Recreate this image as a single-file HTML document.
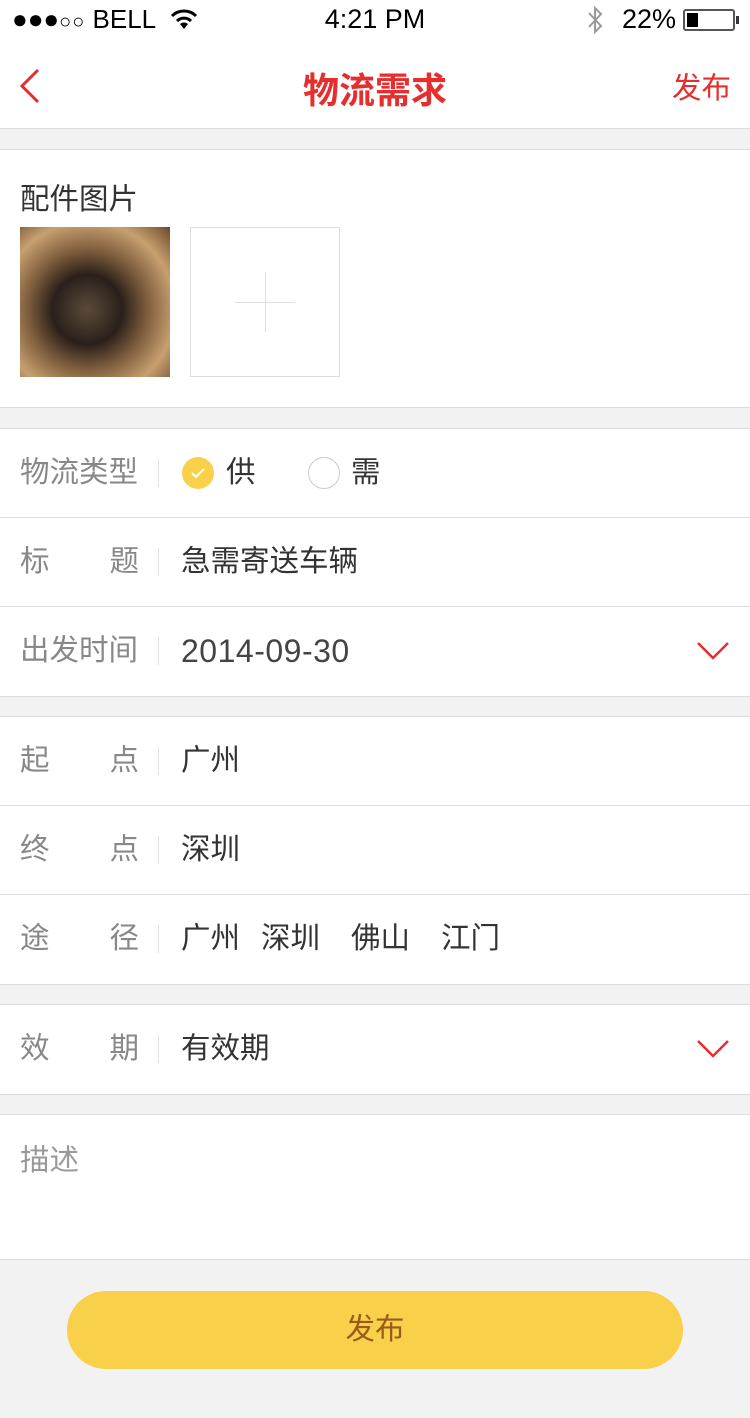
<!DOCTYPE html>
<html><head><meta charset="utf-8"><style>
*{margin:0;padding:0;box-sizing:border-box}
body{width:750px;height:1418px;background:#f2f2f2;font-family:"Liberation Sans","Noto Sans CJK SC",sans-serif;position:relative;overflow:hidden}
.abs{position:absolute}
.sec{position:absolute;left:0;width:750px;background:#fff;border-top:1px solid #ddd;border-bottom:1px solid #ddd}
.row{position:relative;height:89px;border-bottom:1px solid #ddd}
.row:last-child{border-bottom:none}
.lab{position:absolute;left:20px;top:0;width:119px;line-height:88px;font-size:29.5px;color:#888;display:flex;justify-content:space-between}
.div{position:absolute;left:158px;top:30px;width:1px;height:28px;background:#e2e2e2}
.val{position:absolute;left:181px;top:0;line-height:88px;font-size:29.5px;color:#333}
.chev{position:absolute;right:20px;top:34px}
</style></head><body>
<div class="abs" style="top:0;left:0;width:750px;height:129px;background:#fff;border-bottom:1px solid #ddd"></div>
<div class="abs" style="top:4px;left:12px;font-size:26px;color:#000">●●●<span style="font-size:20px;letter-spacing:1px">○○</span> BELL</div>
<svg class="abs" style="left:170px;top:8px" width="28" height="22" viewBox="0 0 28 22"><path d="M2 8 A17 17 0 0 1 26 8" stroke="#000" stroke-width="3" fill="none"/><path d="M7 13 A10 10 0 0 1 21 13" stroke="#000" stroke-width="3" fill="none"/><path d="M14 21 L10 16 A6 6 0 0 1 18 16Z" fill="#000"/></svg>
<div class="abs" style="top:4px;left:0;width:750px;text-align:center;font-size:27px;color:#000">4:21 PM</div>
<svg class="abs" style="left:584px;top:4px" width="22" height="32" viewBox="0 0 22 32"><path d="M5 9 L17 22 L11 28 L11 4 L17 10 L5 23" stroke="#999" stroke-width="2" fill="none"/></svg>
<div class="abs" style="top:4px;left:622px;font-size:27px;color:#000">22%</div>
<div class="abs" style="left:683px;top:9px;width:52px;height:22px;border:2px solid #555;border-radius:3px"><div style="width:11px;height:14px;margin:2px;background:#000"></div></div>
<div class="abs" style="left:736px;top:16px;width:3px;height:8px;background:#333"></div>
<svg class="abs" style="left:18px;top:68px" width="24" height="36" viewBox="0 0 24 36"><path d="M20 2 L4 18 L20 34" stroke="#e62e2e" stroke-width="3" fill="none"/></svg>
<div class="abs" style="top:62px;left:0;width:750px;text-align:center;font-size:36px;font-weight:bold;color:#e62e2e">物流需求</div>
<div class="abs" style="top:65px;left:672px;font-size:29.5px;color:#e62e2e">发布</div>

<div class="sec" style="top:149px;height:259px">
<div class="abs" style="left:20px;top:26px;font-size:29.5px;color:#333">配件图片</div>
<div class="abs" style="left:20px;top:77px;width:150px;height:150px;background:radial-gradient(circle at 45% 55%,#5a4a3a 0,#2a201a 30%,#7a5a3a 50%,#c8a070 75%,#6a4a2a 100%)"></div>
<div class="abs" style="left:190px;top:77px;width:150px;height:150px;border:1px solid #ddd"><div class="abs" style="left:44px;top:74px;width:60px;height:1px;background:#ddd"></div><div class="abs" style="left:74px;top:44px;width:1px;height:60px;background:#ddd"></div></div>
</div>

<div class="sec" style="top:428px">
<div class="row"><div class="lab"><span>物流类型</span></div><div class="div"></div>
<svg class="abs" style="left:182px;top:28px" width="32" height="32"><circle cx="16" cy="16" r="16" fill="#f8d04a"/><path d="M10 16 L14 20 L22 12" stroke="#fff" stroke-width="2" fill="none"/></svg>
<div class="val" style="left:226px">供</div>
<svg class="abs" style="left:308px;top:28px" width="32" height="32"><circle cx="16" cy="16" r="15.5" fill="none" stroke="#ccc"/></svg>
<div class="val" style="left:351px">需</div></div>
<div class="row"><div class="lab"><span>标</span><span>题</span></div><div class="div"></div><div class="val">急需寄送车辆</div></div>
<div class="row"><div class="lab"><span>出发时间</span></div><div class="div"></div><div class="val" style="font-size:32px;color:#444;letter-spacing:0.5px">2014-09-30</div>
<svg class="chev" width="34" height="20"><path d="M2 2 L17 17 L32 2" stroke="#e62e2e" stroke-width="2.5" fill="none"/></svg></div>
</div>

<div class="sec" style="top:716px">
<div class="row"><div class="lab"><span>起</span><span>点</span></div><div class="div"></div><div class="val">广州</div></div>
<div class="row"><div class="lab"><span>终</span><span>点</span></div><div class="div"></div><div class="val">深圳</div></div>
<div class="row"><div class="lab"><span>途</span><span>径</span></div><div class="div"></div><div class="val">广州</div><div class="val" style="left:261px">深圳</div><div class="val" style="left:351px">佛山</div><div class="val" style="left:441px">江门</div></div>
</div>

<div class="sec" style="top:1004px">
<div class="row"><div class="lab"><span>效</span><span>期</span></div><div class="div"></div><div class="val">有效期</div>
<svg class="chev" width="34" height="20"><path d="M2 2 L17 17 L32 2" stroke="#e62e2e" stroke-width="2.5" fill="none"/></svg></div>
</div>

<div class="sec" style="top:1114px;height:146px">
<div class="abs" style="left:20px;top:22px;font-size:29.5px;color:#999">描述</div>
</div>

<div class="abs" style="left:67px;top:1291px;width:616px;height:78px;border-radius:39px;background:#f8d04a;text-align:center;line-height:78px;font-size:29.5px;color:#9a5a1a">发布</div>
</body></html>
